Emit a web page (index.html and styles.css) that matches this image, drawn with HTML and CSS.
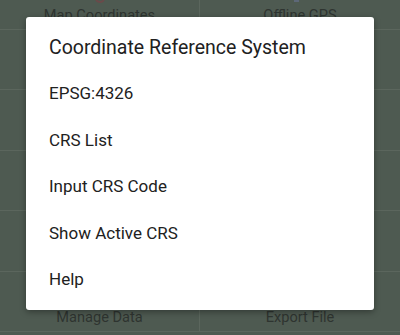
FILE: index.html
```html
<!DOCTYPE html>
<html>
<head>
<meta charset="utf-8">
<link rel="stylesheet" href="styles.css">
</head>
<body>
<div class="grid">
  <div class="cell left">
    <svg class="icon" width="24" height="24" viewBox="0 0 24 24"><path d="M8 21 Q12 25 16 21" fill="none" stroke="#6a4a4a" stroke-width="2"/></svg>
    <span class="label">Map Coordinates</span>
  </div>
  <div class="cell">
    <svg class="icon" width="24" height="24" viewBox="0 0 24 24"><rect x="6" y="19" width="5" height="4" fill="#5d6878"/></svg>
    <span class="label">Offline GPS</span>
  </div>
  <div class="cell left"></div>
  <div class="cell"></div>
  <div class="cell left"></div>
  <div class="cell"></div>
  <div class="cell left"></div>
  <div class="cell"></div>
  <div class="cell left"></div>
  <div class="cell"></div>
  <div class="cell left"><span class="label">Manage Data</span></div>
  <div class="cell"><span class="label">Export File</span></div>
</div>

<div class="dialog">
  <div class="title">Coordinate Reference System</div>
  <ul class="list">
    <li>EPSG:4326</li>
    <li>CRS List</li>
    <li>Input CRS Code</li>
    <li>Show Active CRS</li>
    <li>Help</li>
  </ul>
</div>
</body>
</html>
```

FILE: styles.css
```css
html, body {
  margin: 0;
  padding: 0;
}
body {
  width: 400px;
  height: 335px;
  overflow: hidden;
  background: #4e5a51;
  font-family: Roboto, "Liberation Sans", sans-serif;
  position: relative;
}
.grid {
  display: grid;
  grid-template-columns: 200px 200px;
  grid-auto-rows: 60.5px;
  margin-top: -31px;
}
.cell {
  box-sizing: border-box;
  border-bottom: 1px solid #5b665d;
  display: flex;
  flex-direction: column;
  justify-content: flex-end;
  align-items: center;
  padding-bottom: 6px;
}
.cell.left {
  border-right: 1px solid #5b665d;
}
.icon {
  display: block;
  margin-bottom: 4px;
}
.label {
  font-size: 14.6px;
  line-height: 16px;
  color: #2e3430;
}
.dialog {
  position: absolute;
  left: 26px;
  top: 17px;
  width: 348px;
  height: 293px;
  box-sizing: border-box;
  background: #ffffff;
  border-radius: 3px;
  box-shadow: 0 2px 6px rgba(0,0,0,0.35);
  padding: 19.3px 0 7px 23px;
}
.title {
  font-size: 19.5px;
  line-height: 24px;
  color: #212121;
}
.list {
  list-style: none;
  margin: 9.9px 0 0 0;
  padding: 0;
}
.list li {
  height: 46.5px;
  line-height: 46.5px;
  font-size: 17px;
  color: #212121;
}
```
